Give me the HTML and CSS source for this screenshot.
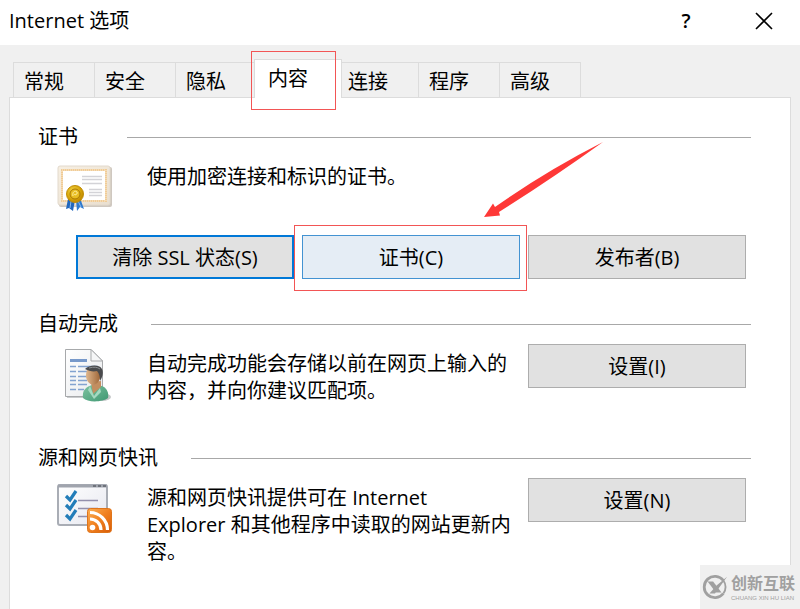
FILE: index.html
```html
<!DOCTYPE html>
<html lang="zh-CN">

<head>
  <meta charset="UTF-8">
  <meta name="viewport" content="width=device-width, initial-scale=1.0">
  <title>Internet 选项</title>
  <link rel="stylesheet" href="styles.css">
</head>

<body>
  <div class="dialog">
    <!-- Title bar -->
    <header class="titlebar">
      <h1>Internet 选项</h1>
      <button type="button" class="title-btn">?</button>
      <button type="button" class="title-btn" aria-label="关闭">
        <svg width="20" height="20" viewBox="0 0 20 20">
          <path d="M2 2L18 18M18 2L2 18" stroke="#000" stroke-width="1.6" fill="none" />
        </svg>
      </button>
    </header>

    <!-- Tabs -->
    <nav class="tabs" role="tablist">
      <button type="button" class="tab" role="tab">常规</button>
      <button type="button" class="tab" role="tab">安全</button>
      <button type="button" class="tab" role="tab">隐私</button>
      <button type="button" class="tab active" role="tab" aria-selected="true">内容</button>
      <button type="button" class="tab" role="tab">连接</button>
      <button type="button" class="tab" role="tab">程序</button>
      <button type="button" class="tab" role="tab">高级</button>
    </nav>

    <main class="panel">
      <!-- Certificates -->
      <section class="group">
        <h2><span>证书</span></h2>
        <div class="row">
          <div class="icon">
            <svg width="56" height="46" viewBox="0 0 56 46">
              <defs>
                <linearGradient id="paper" x1="0" y1="0" x2="1" y2="1">
                  <stop offset="0" stop-color="#f7efe2" />
                  <stop offset="1" stop-color="#e9dfd0" />
                </linearGradient>
                <radialGradient id="gold" cx="0.4" cy="0.35" r="0.7">
                  <stop offset="0" stop-color="#f7dc4c" />
                  <stop offset="0.6" stop-color="#d7a50a" />
                  <stop offset="1" stop-color="#b98200" />
                </radialGradient>
              </defs>
              <rect x="2" y="2" width="53" height="40" rx="2" fill="#cfc8c0" />
              <rect x="1" y="1" width="52" height="39" rx="2" fill="url(#paper)" stroke="#e2d9cc" />
              <rect x="5" y="5" width="44" height="31" fill="#fff" stroke="#efcb98" stroke-width="2" />
              <rect x="5" y="5" width="44" height="31" fill="none" stroke="#f6dcb4" stroke-width="2" stroke-dasharray="1 1" />
              <path d="M25 11.500H45M25 14.500H45M25 18.500H45M32 24.500H45M32 27.500H45M32 30.500H45" stroke="#d3d3d7" stroke-width="1.300" />
              <path d="M11 34L9 44L12 43L16 46L18 35Z" fill="#2167bd" />
              <path d="M19 35L20 46L23 42L27 44L23 33Z" fill="#2f7ace" />
              <path d="M14 36L13 43M21 36L24 42" stroke="#89b9ee" stroke-width="1" />
              <circle cx="18" cy="29" r="8.500" fill="url(#gold)" stroke="#c18e08" stroke-width="1" />
              <circle cx="18" cy="29" r="5" fill="#e8bd23" stroke="#a97705" stroke-width="1" />
              <path d="M16 31C15 27 18 25 20 27C21 29 18 31 17 29" stroke="#fff0a0" stroke-width="1" fill="none" />
            </svg>
          </div>
          <p>使用加密连接和标识的证书。</p>
        </div>
        <div class="actions">
          <button type="button" class="btn btn-default">清除 SSL 状态(S)</button>
          <div class="marked">
            <button type="button" class="btn btn-hover">证书(C)</button>
            <svg class="arrow" width="120" height="76" viewBox="0 0 120 76">
              <path d="M0 75L9 61.500L11 65Q62 29 119 0Q66 38 15 70L16 73.500Z" fill="#fe3837" />
            </svg>
          </div>
          <button type="button" class="btn">发布者(B)</button>
        </div>
      </section>

      <!-- AutoComplete -->
      <section class="group">
        <h2><span>自动完成</span></h2>
        <div class="row">
          <div class="icon">
            <svg width="56" height="54" viewBox="0 0 56 54">
              <defs>
                <linearGradient id="sheet" x1="0" y1="0" x2="1" y2="1">
                  <stop offset="0" stop-color="#fff" />
                  <stop offset="1" stop-color="#e8eaec" />
                </linearGradient>
                <linearGradient id="skin" x1="0" y1="0" x2="1" y2="0">
                  <stop offset="0" stop-color="#e0b78d" />
                  <stop offset="1" stop-color="#9c6436" />
                </linearGradient>
                <linearGradient id="shirt" x1="0" y1="0" x2="1" y2="1">
                  <stop offset="0" stop-color="#7fc3a0" />
                  <stop offset="1" stop-color="#3f9873" />
                </linearGradient>
              </defs>
              <path d="M10 3H36L46 13V50H10Z" fill="#c9cbcd" />
              <path d="M8.500 1.500H34L45.500 13V48.500H8.500Z" fill="url(#sheet)" stroke="#a7a9ab" stroke-linejoin="round" />
              <path d="M34 1.500V13H45.500Z" fill="#f5f6f7" stroke="#a7a9ab" />
              <path d="M13 12.500H30" stroke="#7799ca" stroke-width="3" />
              <path d="M13 18.500H19M21 18.500H41M13 23.500H19M21 23.500H34M13 28.500H19M21 28.500H30M13 32.500H19M21 32.500H30M13 36.500H19M21 36.500H30M13 41.500H19M21 41.500H27" stroke="#83a3d0" stroke-width="1.500" />
              <ellipse cx="45" cy="49" rx="9" ry="4" fill="#c4c6c7" />
              <path d="M26 50C25 42 29 39 35 37L45 38C50 40 52 45 51 50C46 54 31 55 26 50Z" fill="url(#shirt)" />
              <path d="M34 34L36 46L44 39V33Z" fill="#c28e60" />
              <path d="M33 38L37 48L43 40L44 44L37 51L31 42Z" fill="#a4d9c0" />
              <path d="M30 22C27 30 31 36 36 37C42 36 45 29 43 22Z" fill="url(#skin)" />
              <path d="M28 21C32 17 42 16 45 21C47 25 45 30 43 33C43 28 42 25 40 23C36 24 32 23 28 21Z" fill="#4a4b4d" />
              <path d="M32 20Q39 18 43 21" stroke="#8b8e91" fill="none" />
            </svg>
          </div>
          <p>自动完成功能会存储以前在网页上输入的内容，并向你建议匹配项。</p>
          <button type="button" class="btn">设置(I)</button>
        </div>
      </section>

      <!-- Feeds -->
      <section class="group">
        <h2><span>源和网页快讯</span></h2>
        <div class="row">
          <div class="icon">
            <svg width="56" height="50" viewBox="0 0 56 50">
              <defs>
                <linearGradient id="win" x1="0" y1="0" x2="1" y2="1">
                  <stop offset="0" stop-color="#fff" />
                  <stop offset="1" stop-color="#e6e7ef" />
                </linearGradient>
                <linearGradient id="rss" x1="0" y1="0" x2="1" y2="1">
                  <stop offset="0" stop-color="#fbb055" />
                  <stop offset="0.5" stop-color="#f08020" />
                  <stop offset="1" stop-color="#d75c08" />
                </linearGradient>
              </defs>
              <rect x="1" y="1" width="49" height="40" rx="2" fill="url(#win)" stroke="#a9adb5" stroke-width="2" />
              <path d="M1 2H50" stroke="#a0a4ad" stroke-width="3" />
              <path d="M36 2H39M41 2H44M46 2H49" stroke="#5e626b" stroke-width="1.500" />
              <path d="M21 16.500H41M21 24.500H41M21 32.500H34" stroke="#9390ad" stroke-width="1.600" />
              <path d="M9 12L13 16L19 7M9 21L13 25L19 16M9 31L13 35L19 26" stroke="#237db9" stroke-width="3.200" fill="none" />
              <rect x="30.500" y="24.500" width="24" height="24" rx="3" fill="url(#rss)" stroke="#df741a" />
              <circle cx="35.500" cy="43.500" r="2.800" fill="#fff" />
              <path d="M33 35A11 11 0 0 1 44 46M33 28.500A17.500 17.500 0 0 1 50.500 46" stroke="#fff" stroke-width="3.200" fill="none" />
            </svg>
          </div>
          <p>源和网页快讯提供可在 Internet<br>Explorer 和其他程序中读取的网站更新内容。</p>
          <button type="button" class="btn">设置(N)</button>
        </div>
      </section>
    </main>

    <!-- Site logo in the corner -->
    <div class="watermark">
      <svg width="26" height="26" viewBox="0 0 28 28">
        <path d="M23 7A11.500 11.500 0 1 0 23 21" stroke="#a0a0a0" stroke-width="3" fill="none" />
        <path d="M23 7A11.500 11.500 0 0 1 23 21" stroke="#a0a0a0" stroke-width="2" fill="none" />
        <path d="M6 8H12L21 20H15Z" fill="#a0a0a0" />
        <path d="M27 3L16 12L8 21H14L19 14Z" fill="#a0a0a0" />
      </svg>
      <div class="watermark-text">
        <strong>创新互联</strong>
        <span>CHUANG XIN HU LIAN</span>
      </div>
    </div>
  </div>
</body>

</html>
```
FILE: styles.css
```css
* {
  box-sizing: border-box;
}

body {
  margin: 0;
  font-family: "Open Sans", "Noto Sans CJK SC", sans-serif;
  font-size: 20px;
  line-height: 27px;
  color: #000;
  background-color: #f0f0f0;
}

h1,
h2,
p {
  margin: 0;
  font-size: 20px;
  font-weight: normal;
}

button {
  font-family: inherit;
  font-size: 20px;
  line-height: 27px;
  color: #000;
  padding: 0;
  cursor: pointer;
}

.dialog {
  position: relative;
  display: flex;
  flex-direction: column;
  min-height: 100vh;
}

/* Title bar */
.titlebar {
  display: flex;
  align-items: center;
  height: 45px;
  padding: 0 10px 4px 9px;
  background-color: #fff;
}

.titlebar h1 {
  flex: 1;
}

.title-btn {
  display: flex;
  justify-content: center;
  align-items: center;
  width: 52px;
  height: 40px;
  margin-left: 26px;
  border: none;
  background: none;
  font-weight: 600;
}

/* Tabs */
.tabs {
  display: flex;
  align-items: flex-end;
  height: 52px;
  padding-left: 13px;
}

.tab {
  width: 82px;
  height: 35px;
  margin-right: -1px;
  padding: 2px 0 0 10px;
  border: 1px solid #dcdcdc;
  border-bottom: none;
  background-color: #f0f0f0;
  text-align: left;
}

.tab.active {
  position: relative;
  z-index: 1;
  width: 88px;
  height: 39px;
  margin: 0 -5px -1px -2px;
  padding: 0 0 1px 13px;
  background-color: #fff;
}

/* Red frames around the steps to click */
.tab.active::after,
.marked::after {
  content: "";
  position: absolute;
  border: 1px solid #f25555;
  pointer-events: none;
}

.tab.active::after {
  inset: -9px 5px -12px -4px;
}

.marked::after {
  inset: -10px -7px -12px -8px;
}

/* Content panel */
.panel {
  flex: 1;
  margin: 0 9px;
  padding: 25px 39px 24px 28px;
  border: 1px solid #dcdcdc;
  border-bottom: none;
  background-color: #fff;
}

.group + .group {
  margin-top: 31px;
}

.group h2 {
  display: flex;
  align-items: center;
  line-height: 28px;
}

.group h2 span {
  min-width: 56px;
}

.group h2::after {
  content: "";
  flex: 1;
  height: 1px;
  margin-left: 33px;
  background-color: #a8a8a8;
}

.row {
  display: flex;
  align-items: flex-start;
  min-height: 69px;
  margin-top: 6px;
  padding: 0 5px 0 19px;
}

.icon {
  display: flex;
  flex: none;
  align-items: center;
  height: 62px;
}

.row p {
  flex: 1;
  margin: 6px 8px 0 34px;
}

.actions {
  display: grid;
  grid-template-columns: repeat(3, 1fr);
  gap: 8px;
  margin-top: 9px;
  padding: 0 5px 0 38px;
}

/* Buttons */
.btn {
  width: 218px;
  height: 44px;
  border: 1px solid #adadad;
  background-color: #e1e1e1;
}

.actions .btn {
  width: 100%;
}

.btn-default {
  border: 2px solid #0078d7;
}

.btn-hover {
  border-color: #4393d2;
  background-color: #e5edf5;
}

.marked {
  position: relative;
}

.arrow {
  position: absolute;
  left: 182px;
  top: -93px;
}

/* Corner logo */
.watermark {
  position: absolute;
  right: 0;
  bottom: 0;
  z-index: 2;
  display: flex;
  align-items: center;
  gap: 3px;
  width: 100px;
  height: 44px;
  padding-left: 2px;
  background-color: #f0f0f0;
  color: #a0a0a0;
}

.watermark-text {
  display: flex;
  flex-direction: column;
  white-space: nowrap;
}

.watermark strong {
  font-size: 16px;
  line-height: 22px;
}

.watermark span {
  font-family: "Liberation Sans", Arial, sans-serif;
  font-size: 6px;
  line-height: 8px;
}
```
